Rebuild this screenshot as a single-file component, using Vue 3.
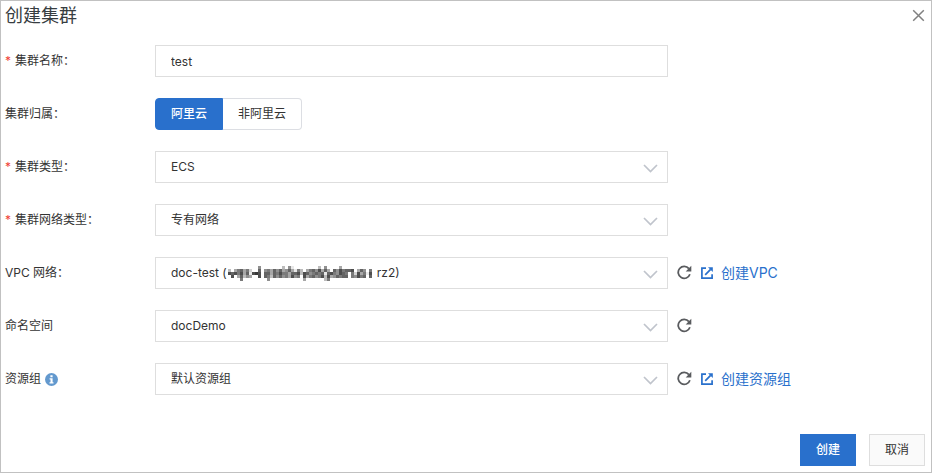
<script setup>
import { ref } from 'vue'

const name = ref('test')
const owner = ref('阿里云')
const owners = ['阿里云', '非阿里云']

const selects = ref([
  { id: 'type', label: '集群类型：', required: true, value: 'ECS' },
  { id: 'net', label: '集群网络类型：', required: true, value: '专有网络' },
  {
    id: 'vpc',
    label: 'VPC 网络：',
    value: 'doc-test (' + '\u2003'.repeat(12) + '\u2002rz2)',
    masked: true,
    refresh: true,
    link: '创建VPC',
  },
  { id: 'ns', label: '命名空间', value: 'docDemo', refresh: true },
  { id: 'group', label: '资源组', info: true, value: '默认资源组', refresh: true, link: '创建资源组' },
])

// Mosaic over the hidden part of the VPC id: one digit per cell, 0 = blank, 9 = darkest.
const mosaicRows = [
  '0000000000500000003051000000003050000400000000000',
  '3046746200705647574574163046758474075867780475060',
  '8786847189807747686647783875676717865876062846180',
  '0804735400807637575648560846756838457677065867070',
  '0000600000000500000000000400000036000000000000000',
]
const cells = mosaicRows.flatMap((row, y) =>
  [...row].map((v, x) => ({ x, y, o: Number(v) / 10 })).filter((c) => c.o > 0)
)
</script>

<template>
  <main class="dialog">
    <header class="head">
      <h1>创建集群</h1>
      <button class="close" type="button" aria-label="关闭">
        <svg width="13" height="13" viewBox="0 0 13 13"><path d="M1.2 1.2 11.8 11.8M11.8 1.2 1.2 11.8" /></svg>
      </button>
    </header>

    <form class="form" @submit.prevent>
      <div class="row">
        <label for="name"><span class="star">*</span>集群名称：</label>
        <input id="name" v-model="name" class="control" type="text" />
      </div>

      <div class="row">
        <span id="owner-label" class="label">集群归属：</span>
        <div class="segments" role="group" aria-labelledby="owner-label">
          <button
            v-for="o in owners"
            :key="o"
            type="button"
            :class="{ on: owner === o }"
            :aria-pressed="owner === o"
            @click="owner = o"
          >{{ o }}</button>
        </div>
      </div>

      <div v-for="s in selects" :key="s.id" class="row">
        <label :for="s.id">
          <span v-if="s.required" class="star">*</span>{{ s.label }}
          <svg v-if="s.info" class="info" width="13" height="13" viewBox="0 0 13 13">
            <circle cx="6.5" cy="6.5" r="6.5" />
            <path d="M5.4 2.3H7.6V4.2H5.4ZM4.6 5.2H7.6V9.2H8.5V10.4H4.5V9.2H5.5V6.4H4.6Z" />
          </svg>
        </label>
        <div class="picker">
          <select :id="s.id" v-model="s.value" class="control">
            <option :value="s.value">{{ s.value }}</option>
          </select>
          <svg v-if="s.masked" class="mosaic" width="147" height="15" viewBox="0 0 49 5">
            <rect v-for="(c, i) in cells" :key="i" :x="c.x" :y="c.y" width="1" height="1" :fill-opacity="c.o" />
          </svg>
          <svg class="arrow" width="15" height="9" viewBox="0 0 15 9"><path d="M1 1 7.5 7.5 14 1" /></svg>
        </div>
        <div v-if="s.refresh" class="extras">
          <button class="refresh" type="button" aria-label="刷新">
            <svg width="15" height="15" viewBox="0 0 15 15">
              <path class="arc" d="M11.9 3.6A6 6 0 1 0 12.9 9.3" />
              <path class="tip" d="M14.3 .8V6.4H8.7Z" />
            </svg>
          </button>
          <a v-if="s.link" href="#">
            <svg width="12" height="12" viewBox="0 0 12 12">
              <path class="box" d="M5 1.2H.9V11.1H11.1V7.2M4.2 7.8 9.6 2.4" />
              <path class="tip" d="M7 .3H11.8V5.1Z" />
            </svg>
            {{ s.link }}
          </a>
        </div>
      </div>
    </form>

    <footer class="foot">
      <button class="primary" type="button">创建</button>
      <button type="button">取消</button>
    </footer>
  </main>
</template>

<style>
body {
  background: #fff;
}
</style>

<style scoped>
.dialog {
  box-sizing: border-box;
  min-height: 100vh;
  display: flex;
  flex-direction: column;
  padding: 0 6px 6px 4px;
  border: 1px solid #c1c1c1;
  background: #fff;
  color: #333;
  font: 12px/20px Inter, "Noto Sans CJK SC", sans-serif;
}
button,
input,
select {
  font: inherit;
  color: inherit;
}
button {
  cursor: pointer;
}
.head {
  display: flex;
  justify-content: space-between;
  align-items: center;
  height: 29px;
}
h1 {
  margin: 0;
  font-size: 18px;
  line-height: 28px;
  font-weight: 400;
  color: #373d41;
}
.close {
  display: flex;
  padding: 0;
  border: 0;
  background: none;
}
.close path {
  fill: none;
  stroke: #808080;
  stroke-width: 1.5;
}
.form {
  display: grid;
  gap: 21px;
  padding-top: 15px;
}
.row {
  display: grid;
  grid-template-columns: 150px minmax(0, 1fr) 257px;
  align-items: center;
}
label,
.label {
  display: flex;
  align-items: center;
}
.star {
  width: 10px;
  color: #f04134;
}
.info {
  margin-left: 4px;
}
.info circle {
  fill: #6399ce;
}
.info path {
  fill: #fff;
}
.control {
  box-sizing: border-box;
  display: block;
  width: 100%;
  height: 32px;
  margin: 0;
  padding: 0 15px;
  border: 1px solid #dedede;
  border-radius: 0;
  background: #fff;
  appearance: none;
  outline: none;
}
.picker {
  position: relative;
}
.arrow {
  position: absolute;
  right: 10px;
  top: 13px;
  fill: none;
  stroke: #c0c4cc;
  stroke-width: 1.7;
  pointer-events: none;
}
.mosaic {
  position: absolute;
  left: 73px;
  top: 9px;
  fill: #222;
  shape-rendering: crispEdges;
  pointer-events: none;
}
.segments {
  display: flex;
}
.segments button {
  height: 32px;
  padding: 0 15px;
  border: 1px solid #dcdee3;
  border-left: 0;
  border-radius: 0 4px 4px 0;
  background: #fff;
}
.segments button:first-child {
  border-left: 1px solid #dcdee3;
  border-radius: 4px 0 0 4px;
}
.segments .on,
.segments .on:first-child {
  border-color: #2970cc;
  background: #2970cc;
  color: #fff;
  font-weight: 500;
}
.extras {
  display: flex;
  align-items: center;
  padding-left: 9px;
  gap: 9px;
}
.refresh {
  display: flex;
  padding: 0 0 2px;
  border: 0;
  background: none;
}
.refresh .arc {
  fill: none;
  stroke: #595b5e;
  stroke-width: 1.8;
}
.refresh .tip {
  fill: #595b5e;
}
a {
  display: flex;
  align-items: center;
  gap: 8px;
  color: #2970cc;
  font-size: 14px;
  text-decoration: none;
}
a .box {
  fill: none;
  stroke: #2970cc;
  stroke-width: 1.7;
}
a .tip {
  fill: #2970cc;
}
.foot {
  display: flex;
  justify-content: flex-end;
  gap: 13px;
  margin-top: auto;
  padding-top: 20px;
}
.foot button {
  width: 56px;
  height: 32px;
  padding: 0;
  border: 1px solid #dedede;
  background: #fafafa;
}
.foot .primary {
  border-color: #2970cc;
  background: #2970cc;
  color: #fff;
  font-weight: 500;
}
</style>
